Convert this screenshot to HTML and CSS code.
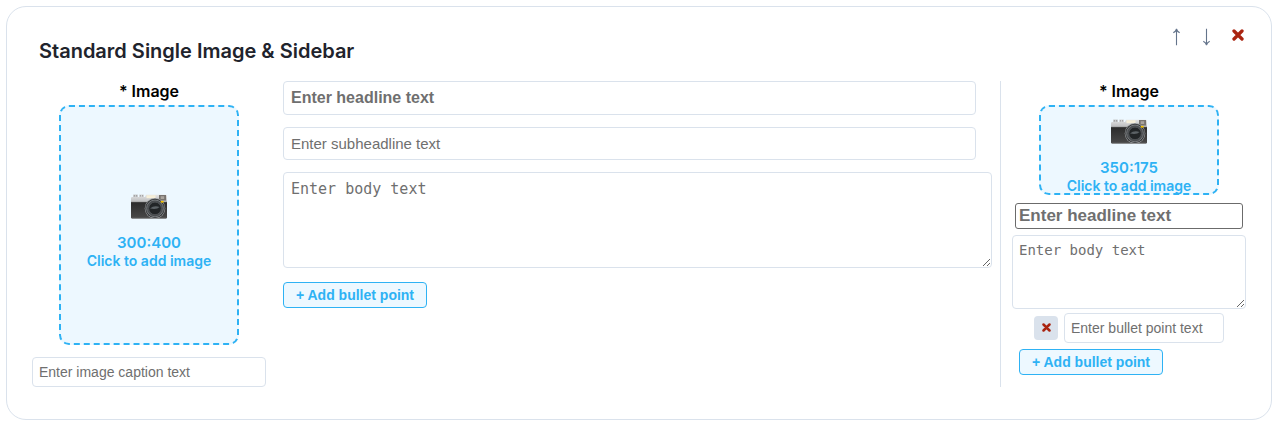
FILE: index.html
```html
<!DOCTYPE html>
<html lang="en">
<head>
<meta charset="utf-8">
<title>Standard Single Image &amp; Sidebar</title>
<link rel="stylesheet" href="styles.css">
</head>
<body>
<svg class="sprite" width="0" height="0" aria-hidden="true">
  <defs>
    <linearGradient id="metal" x1="0" y1="0" x2="0" y2="1"><stop offset="0" stop-color="#e4e4e4"/><stop offset="1" stop-color="#b4b5b7"/></linearGradient>
    <linearGradient id="leather" x1="0" y1="0" x2="0" y2="1"><stop offset="0" stop-color="#2b2b2b"/><stop offset="1" stop-color="#494949"/></linearGradient>
    <symbol id="camera" viewBox="0 0 36 25">
      <rect x="2" y="0.5" width="5" height="3" rx=".6" fill="#c9cbcd"/>
      <rect x="8" y="0.5" width="5" height="3" rx=".6" fill="#d4d5d7"/>
      <path d="M0 4.2Q0 3 1.2 3H14L15 .7H34.5Q36 .7 36 2V9H0Z" fill="url(#metal)"/>
      <path d="M3.5 1v1.6M5.5 1v1.6M9.5 1v1.6M11.5 1v1.6" stroke="#888" stroke-width=".6"/>
      <rect x="15.5" y="1.2" width="9" height="3" fill="#f6efd9"/>
      <rect x="28" y="1" width="7" height="5.6" fill="#77736f"/>
      <rect x="29.7" y="2.2" width="3.5" height="2.8" fill="#aaa49d"/>
      <path d="M0 8H36V23.5Q36 24.5 35 24.5H1Q0 24.5 0 23.5Z" fill="url(#leather)"/>
      <path d="M0 8.2H36" stroke="#666" stroke-width=".5"/>
      <path d="M1 24.2H35" stroke="#777" stroke-width=".7"/>
      <circle cx="24" cy="14.4" r="10.3" fill="#9b9ea0"/>
      <circle cx="24" cy="14.4" r="9.7" fill="#303234"/>
      <circle cx="24" cy="14.4" r="8.4" fill="#4a4d50" stroke="#85898b" stroke-width=".8"/>
      <circle cx="24" cy="14.4" r="6.3" fill="#222527" stroke="#55595c" stroke-width=".8"/>
      <path d="M19 14.6Q23 11 28.6 13Q26 16 19 14.6Z" fill="#5c6266"/>
      <rect x="29.8" y="6.9" width="2.8" height="1.7" fill="#f5c400"/>
    </symbol>
    <symbol id="cross" viewBox="0 0 12 12"><path d="M2 2L10 10M10 2L2 10" stroke="#aa2410" stroke-width="3.3" stroke-linecap="round"/></symbol>
  </defs>
</svg>
<main class="card">
  <header class="head">
    <h1 class="title">Standard Single Image &amp; Sidebar</h1>
    <div class="tools">
      <svg class="arrow" width="8" height="18" viewBox="0 0 8 18"><path d="M3.5 17.3V1.2M.3 4.8Q2.9 3.4 3.5 1Q4.1 3.4 6.7 4.8"/></svg>
      <svg class="arrow" width="8" height="18" viewBox="0 0 8 18"><path d="M3.5 .7V16.8M.3 13.2Q2.9 14.6 3.5 17Q4.1 14.6 6.7 13.2"/></svg>
      <svg class="remove" width="12" height="12"><use href="#cross"/></svg>
    </div>
  </header>
  <div class="columns">
    <section class="media">
      <div class="label">* Image</div>
      <div class="drop drop-tall">
        <svg class="camera" width="36" height="25"><use href="#camera"/></svg>
        <div class="ratio">300:400</div>
        <div class="hint">Click to add image</div>
      </div>
      <input class="field caption" placeholder="Enter image caption text">
    </section>
    <section class="content">
      <input class="field headline" placeholder="Enter headline text">
      <input class="field subheadline" placeholder="Enter subheadline text">
      <textarea class="field body-text" placeholder="Enter body text"></textarea>
      <button class="add">+ Add bullet point</button>
    </section>
    <aside class="sidebar">
      <div class="label">* Image</div>
      <div class="drop drop-short">
        <svg class="camera" width="36" height="25"><use href="#camera"/></svg>
        <div class="ratio">350:175</div>
        <div class="hint">Click to add image</div>
      </div>
      <input class="field side-headline" placeholder="Enter headline text">
      <textarea class="field side-body" placeholder="Enter body text"></textarea>
      <div class="bullet">
        <button class="bullet-remove" aria-label="Remove"><svg width="9" height="9" viewBox="0 0 12 12"><use href="#cross"/></svg></button>
        <input class="field bullet-text" placeholder="Enter bullet point text">
      </div>
      <button class="add side-add">+ Add bullet point</button>
    </aside>
  </div>
</main>
</body>
</html>
```
FILE: styles.css
```css
* { box-sizing: border-box; }
body { margin: 0; padding: 6px; background: #fff; font-family: Inter, sans-serif; }
.sprite { position: absolute; }
.card { width: 1266px; height: 414px; border: 1px solid #dae2ec; border-radius: 20px; padding: 0 14px 0 25px; }
.head { height: 74px; padding: 0 13px 0 7px; display: flex; justify-content: space-between; }
.title { margin: 32px 0 0; font-size: 20px; line-height: 24px; font-weight: 600; color: #21232c; }
.tools { display: flex; align-items: flex-start; gap: 22px; padding-top: 21px; }
.arrow { fill: none; stroke: #64748b; stroke-width: 1.1; }
.remove { margin: 1px 0 0 -1px; }
.columns { display: grid; grid-template-columns: 234px 1fr 257px; }
.media { display: flex; flex-direction: column; align-items: center; }
.label { height: 24px; font-size: 16px; line-height: 21px; font-weight: 600; color: #000; }
.drop { width: 180px; border: 2px dashed #2eb2f4; border-radius: 10px; background: #edf8ff; color: #2eb2f4; font-weight: 600; text-align: center; display: flex; flex-direction: column; align-items: center; }
.drop-tall { height: 240px; padding-top: 87px; }
.drop-short { height: 90px; padding-top: 12px; }
.camera { flex: none; margin-bottom: 14px; }
.ratio { font-size: 15px; line-height: 19px; }
.hint { font-size: 14px; line-height: 17px; }
.field { display: block; margin: 0; border: 1px solid #dae2ec; border-radius: 4px; padding: 0 7px; background: #fff; font-family: "Liberation Sans", Arial, sans-serif; outline: none; }
.field::placeholder { color: #6f6f6f; opacity: 1; }
.caption { width: 234px; height: 30px; margin-top: 12px; padding: 0 6px; font-size: 14px; }
.content { padding-left: 17px; }
.headline { width: 693px; height: 34px; font-size: 16px; font-weight: 700; }
.subheadline { width: 693px; height: 33px; margin-top: 12px; font-size: 15px; }
.body-text { width: 709px; height: 96px; margin-top: 12px; padding: 7px; font-family: "DejaVu Sans Mono", monospace; font-size: 15px; }
.add { display: block; width: 144px; height: 26px; margin-top: 14px; padding: 0; border: 1px solid #2eb2f4; border-radius: 4px; background: #edf8ff; color: #2eb2f4; font: 700 14px "Liberation Sans", Arial, sans-serif; }
.sidebar { height: 306px; border-left: 1px solid #dae2ec; display: flex; flex-direction: column; align-items: center; }
.side-headline { width: 228px; height: 26px; margin-top: 8px; padding: 0 3px; border-color: #6b6b6b; border-radius: 3px; font-size: 17px; font-weight: 700; }
.side-body { width: 234px; height: 74px; margin-top: 6px; padding: 6px; font-family: "DejaVu Sans Mono", monospace; font-size: 14px; }
.bullet { display: flex; align-items: center; gap: 6px; margin-top: 4px; }
.bullet-remove { width: 24px; height: 24px; padding: 0 0 2px; border: 0; border-radius: 4px; background: #dae2ec; display: flex; align-items: center; justify-content: center; }
.bullet-text { width: 160px; height: 30px; padding: 0 6px; font-size: 14px; }
.side-add { align-self: flex-start; margin: 6px 0 0 18px; }
```
